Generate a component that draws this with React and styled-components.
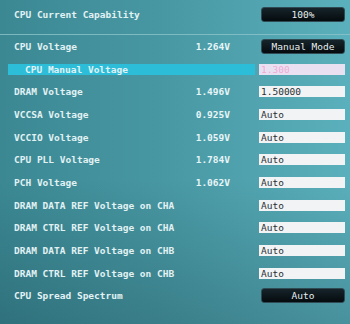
import React from 'react';
import styled, { createGlobalStyle, css } from 'styled-components';

const GlobalStyle = createGlobalStyle`
  html, body {
    margin: 0;
    padding: 0;
    width: 350px;
    height: 324px;
    overflow: hidden;
  }
`;

const Screen = styled.div`
  width: 350px;
  height: 324px;
  box-sizing: border-box;
  padding-top: 3px;
  font-family: "DejaVu Sans Mono", "Liberation Mono", monospace;
  font-size: 9.5px;
  font-weight: bold;
  color: #e2f2f4;
  background:
    linear-gradient(180deg, rgba(0, 0, 0, 0) 55%, rgba(0, 25, 35, 0.2) 100%),
    linear-gradient(90deg, #3b8893 0%, #4797a2 45%, #5ab0bc 100%);
`;

const Row = styled.div`
  display: flex;
  align-items: center;
  gap: 4px;
  height: ${p => (p.$top ? '22px' : '22.7px')};
  padding: 0 5px 0 8px;
`;

const Main = styled.div`
  flex: 1;
  display: flex;
  align-items: center;
  height: 11px;
  padding: 0 25px 0 6px;
  ${p =>
    p.$selected &&
    css`
      background-color: #2cbdd8;
    `}
`;

const Label = styled.div`
  flex: 1;
  white-space: nowrap;
  padding-left: ${p => (p.$indent ? '11px' : '0')};
`;

const Value = styled.div`
  text-align: right;
  color: #e8f5f7;
`;

const Separator = styled.div`
  height: 1px;
  margin-top: 9px;
  background-color: #8cc3cb;
  opacity: 0.8;
`;

const DarkButton = styled.div`
  width: 84px;
  height: 15px;
  margin-left: 2px;
  box-sizing: border-box;
  display: flex;
  align-items: center;
  justify-content: center;
  background: linear-gradient(180deg, #16242a 0%, #050b0e 100%);
  border: 1px solid #2f4a52;
  border-radius: 3px;
  color: #e6eef0;
  font-weight: normal;
`;

const Input = styled.div`
  width: 86px;
  height: 11px;
  box-sizing: border-box;
  display: flex;
  align-items: center;
  padding-left: 2px;
  background-color: ${p => (p.$dim ? '#e9e1f1' : '#f1f3f4')};
  color: ${p => (p.$dim ? '#f1a9d6' : '#2a3034')};
  font-weight: normal;
`;

const rows = [
  { label: 'CPU Voltage', value: '1.264V', button: 'Manual Mode' },
  { label: 'CPU Manual Voltage', input: '1.300', selected: true, indent: true },
  { label: 'DRAM Voltage', value: '1.496V', input: '1.50000' },
  { label: 'VCCSA Voltage', value: '0.925V', input: 'Auto' },
  { label: 'VCCIO Voltage', value: '1.059V', input: 'Auto' },
  { label: 'CPU PLL Voltage', value: '1.784V', input: 'Auto' },
  { label: 'PCH Voltage', value: '1.062V', input: 'Auto' },
  { label: 'DRAM DATA REF Voltage on CHA', input: 'Auto' },
  { label: 'DRAM CTRL REF Voltage on CHA', input: 'Auto' },
  { label: 'DRAM DATA REF Voltage on CHB', input: 'Auto' },
  { label: 'DRAM CTRL REF Voltage on CHB', input: 'Auto' },
  { label: 'CPU Spread Spectrum', button: 'Auto' },
];

export default function App() {
  return (
    <>
      <GlobalStyle />
      <Screen>
        <Row $top>
          <Main>
            <Label>CPU Current Capability</Label>
          </Main>
          <DarkButton>100%</DarkButton>
        </Row>
        <Separator />
        {rows.map(r => (
          <Row key={r.label}>
            <Main $selected={r.selected}>
              <Label $indent={r.indent}>{r.label}</Label>
              {r.value && <Value>{r.value}</Value>}
            </Main>
            {r.button && <DarkButton>{r.button}</DarkButton>}
            {r.input && <Input $dim={r.selected}>{r.input}</Input>}
          </Row>
        ))}
      </Screen>
    </>
  );
}
